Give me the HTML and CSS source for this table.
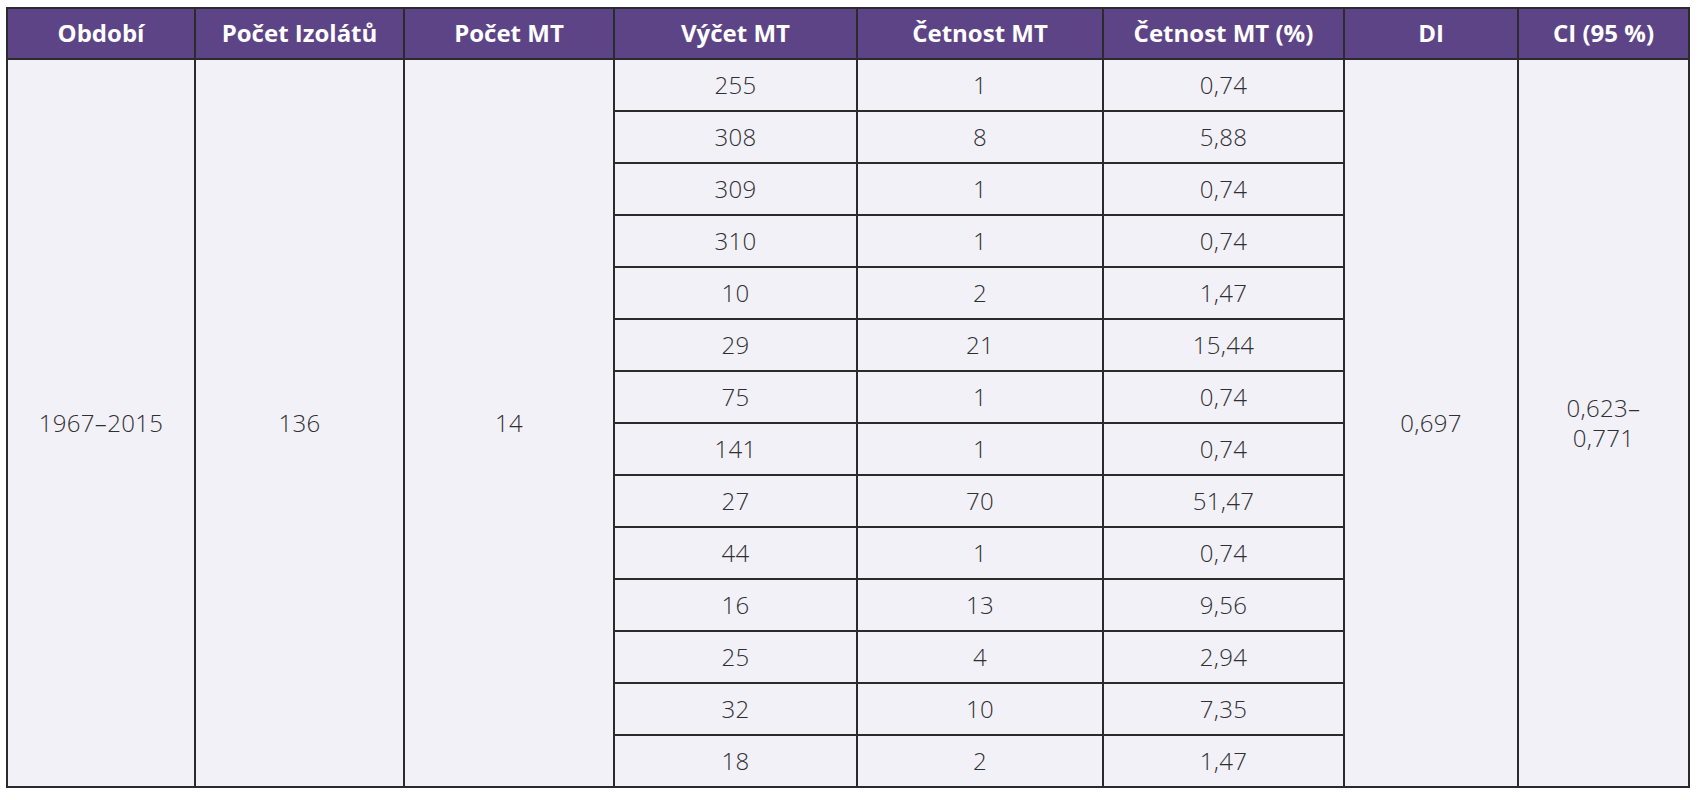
FILE: index.html
```html
<!DOCTYPE html>
<html lang="cs">
<head>
<meta charset="utf-8">
<title>Tabulka MT</title>
<link rel="stylesheet" href="styles.css">
</head>
<body>
<table class="data">
  <colgroup>
    <col class="c1"><col class="c2"><col class="c3"><col class="c4"><col class="c5"><col class="c6"><col class="c7"><col class="c8">
  </colgroup>
  <thead>
    <tr>
      <th>Období</th>
      <th>Počet Izolátů</th>
      <th>Počet MT</th>
      <th>Výčet MT</th>
      <th>Četnost MT</th>
      <th>Četnost MT (%)</th>
      <th>DI</th>
      <th>CI (95 %)</th>
    </tr>
  </thead>
  <tbody>
    <tr>
      <td rowspan="14">1967–2015</td>
      <td rowspan="14">136</td>
      <td rowspan="14">14</td>
      <td>255</td><td>1</td><td>0,74</td>
      <td rowspan="14">0,697</td>
      <td rowspan="14">0,623–<br>0,771</td>
    </tr>
    <tr><td>308</td><td>8</td><td>5,88</td></tr>
    <tr><td>309</td><td>1</td><td>0,74</td></tr>
    <tr><td>310</td><td>1</td><td>0,74</td></tr>
    <tr><td>10</td><td>2</td><td>1,47</td></tr>
    <tr><td>29</td><td>21</td><td>15,44</td></tr>
    <tr><td>75</td><td>1</td><td>0,74</td></tr>
    <tr><td>141</td><td>1</td><td>0,74</td></tr>
    <tr><td>27</td><td>70</td><td>51,47</td></tr>
    <tr><td>44</td><td>1</td><td>0,74</td></tr>
    <tr><td>16</td><td>13</td><td>9,56</td></tr>
    <tr><td>25</td><td>4</td><td>2,94</td></tr>
    <tr><td>32</td><td>10</td><td>7,35</td></tr>
    <tr><td>18</td><td>2</td><td>1,47</td></tr>
  </tbody>
</table>
</body>
</html>
```

FILE: styles.css
```css
html, body {
  background: #ffffff;
}
body {
  margin: 7px 0 0 6px;
  font-family: "Open Sans", "Liberation Sans", sans-serif;
}
.data {
  border-collapse: collapse;
  table-layout: fixed;
  width: 1684px;
  border: 2px solid #2b2b2e;
}
.c1 { width: 188px; }
.c2 { width: 209px; }
.c3 { width: 210px; }
.c4 { width: 243px; }
.c5 { width: 246px; }
.c6 { width: 241px; }
.c7 { width: 174px; }
.c8 { width: 171px; }
.data th {
  background: #5d4487;
  color: #ffffff;
  font-weight: 700;
  font-size: 24px;
  height: 49px;
  padding: 0 4px;
  border: 2px solid #2b2b2e;
  text-align: center;
  vertical-align: middle;
  line-height: 1.2;
  white-space: nowrap;
}
.data td {
  background: #f2f1f7;
  color: #2f2f33;
  font-weight: 300;
  font-size: 24px;
  letter-spacing: 0.3px;
  height: 50px;
  padding: 0 4px;
  border: 2px solid #2b2b2e;
  text-align: center;
  vertical-align: middle;
  line-height: 1.25;
}
```
